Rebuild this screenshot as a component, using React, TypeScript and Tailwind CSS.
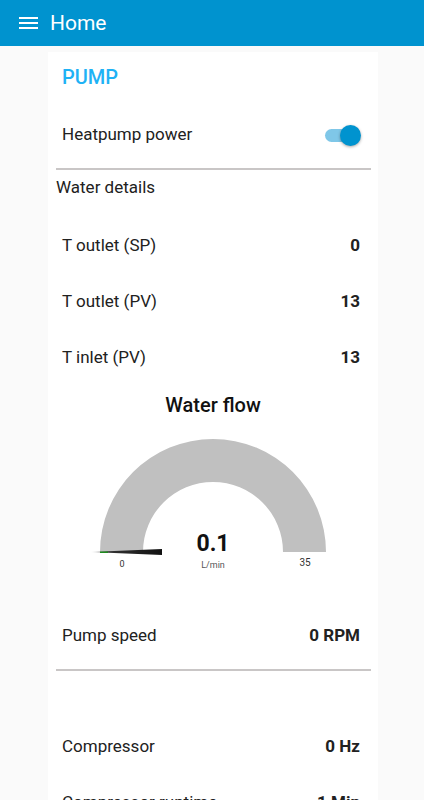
import React from 'react'

function Row({ label, value }: { label: string; value: string }) {
  return (
    <div className="flex h-[56px] items-center justify-between pl-[14px] pr-[18px] text-[17px] text-[#212121]">
      <span>{label}</span>
      <span className="font-bold">{value}</span>
    </div>
  )
}

function Divider() {
  return <div className="ml-[8px] mr-[7px] h-[2px] bg-[#c9c6c6]" />
}

function Gauge() {
  // centre of the dial sits at (165, 135) in svg coords
  const cx = 165
  const cy = 135
  const ro = 113
  const ri = 70
  const arc = `M ${cx - ro} ${cy} A ${ro} ${ro} 0 0 1 ${cx + ro} ${cy} L ${cx + ri} ${cy} A ${ri} ${ri} 0 0 0 ${cx - ri} ${cy} Z`
  return (
    <svg width="330" height="155" viewBox="0 0 330 155" className="block">
      <defs>
        <linearGradient id="needle" x1="0" x2="1" y1="0" y2="0">
          <stop offset="0" stopColor="#ffffff" />
          <stop offset="0.25" stopColor="#333333" />
          <stop offset="1" stopColor="#111111" />
        </linearGradient>
      </defs>
      <path d={arc} fill="#c0c0c0" />
      <polygon points="42,135 114,132 114,138" fill="url(#needle)" />
      <rect x="52" y="134.5" width="8" height="1.5" fill="#1e8a1e" />
      <text x={cx} y="134" textAnchor="middle" fontSize="23" fontWeight="700" fill="#111111" fontFamily="Roboto, sans-serif">0.1</text>
      <text x={cx} y="151" textAnchor="middle" fontSize="9" fill="#555555" fontFamily="Roboto, sans-serif">L/min</text>
      <text x="74" y="150" textAnchor="middle" fontSize="9" fill="#333333" fontFamily="Roboto, sans-serif">0</text>
      <text x="257" y="149" textAnchor="middle" fontSize="10" fill="#333333" fontFamily="Roboto, sans-serif">35</text>
    </svg>
  )
}

export default function App() {
  return (
    <div className="h-[800px] overflow-hidden bg-[#fafafa] font-['Roboto',sans-serif]">
      <header className="flex h-[46px] items-center bg-[#0093cf] text-white">
        <div className="ml-[19px] flex w-[19px] flex-col gap-[3px]">
          <span className="h-[2px] bg-white" />
          <span className="h-[2px] bg-white" />
          <span className="h-[2px] bg-white" />
        </div>
        <h1 className="ml-[12px] text-[21px] leading-none">Home</h1>
      </header>

      <div className="ml-[48px] mt-[6px] w-[330px] bg-white">
        <div className="pl-[14px] pt-[13px] text-[20px] leading-[24px] font-medium text-[#1fb2f5]">PUMP</div>

        <div className="mt-[18px] flex h-[56px] items-center justify-between pl-[14px] pr-[17px] text-[17px] text-[#212121]">
          <span>Heatpump power</span>
          <div className="relative flex h-[21px] w-[36px] items-center">
            <div className="h-[13px] w-[34px] rounded-full bg-[#7fc7e8]" />
            <div className="absolute right-0 top-0 h-[21px] w-[21px] rounded-full bg-[#0093cf] shadow-[0_1px_3px_rgba(0,0,0,0.35)]" />
          </div>
        </div>

        <div className="mt-[5px]">
          <Divider />
        </div>

        <div className="ml-[8px] mt-[7px] text-[17px] leading-[20px] text-[#212121]">Water details</div>

        <div className="mt-[21px]">
          <Row label="T outlet (SP)" value="0" />
          <Row label="T outlet (PV)" value="13" />
          <Row label="T inlet (PV)" value="13" />
        </div>

        <div className="mt-[7px] text-center text-[20px] leading-[24px] font-medium text-[#111111]">Water flow</div>
        <Gauge />

        <div className="mt-[36px]">
          <Row label="Pump speed" value="0 RPM" />
        </div>
        <div className="mt-[5px]">
          <Divider />
        </div>

        <div className="mt-[48px]">
          <Row label="Compressor" value="0 Hz" />
          <Row label="Compressor runtime" value="1 Min" />
        </div>
      </div>
    </div>
  )
}
